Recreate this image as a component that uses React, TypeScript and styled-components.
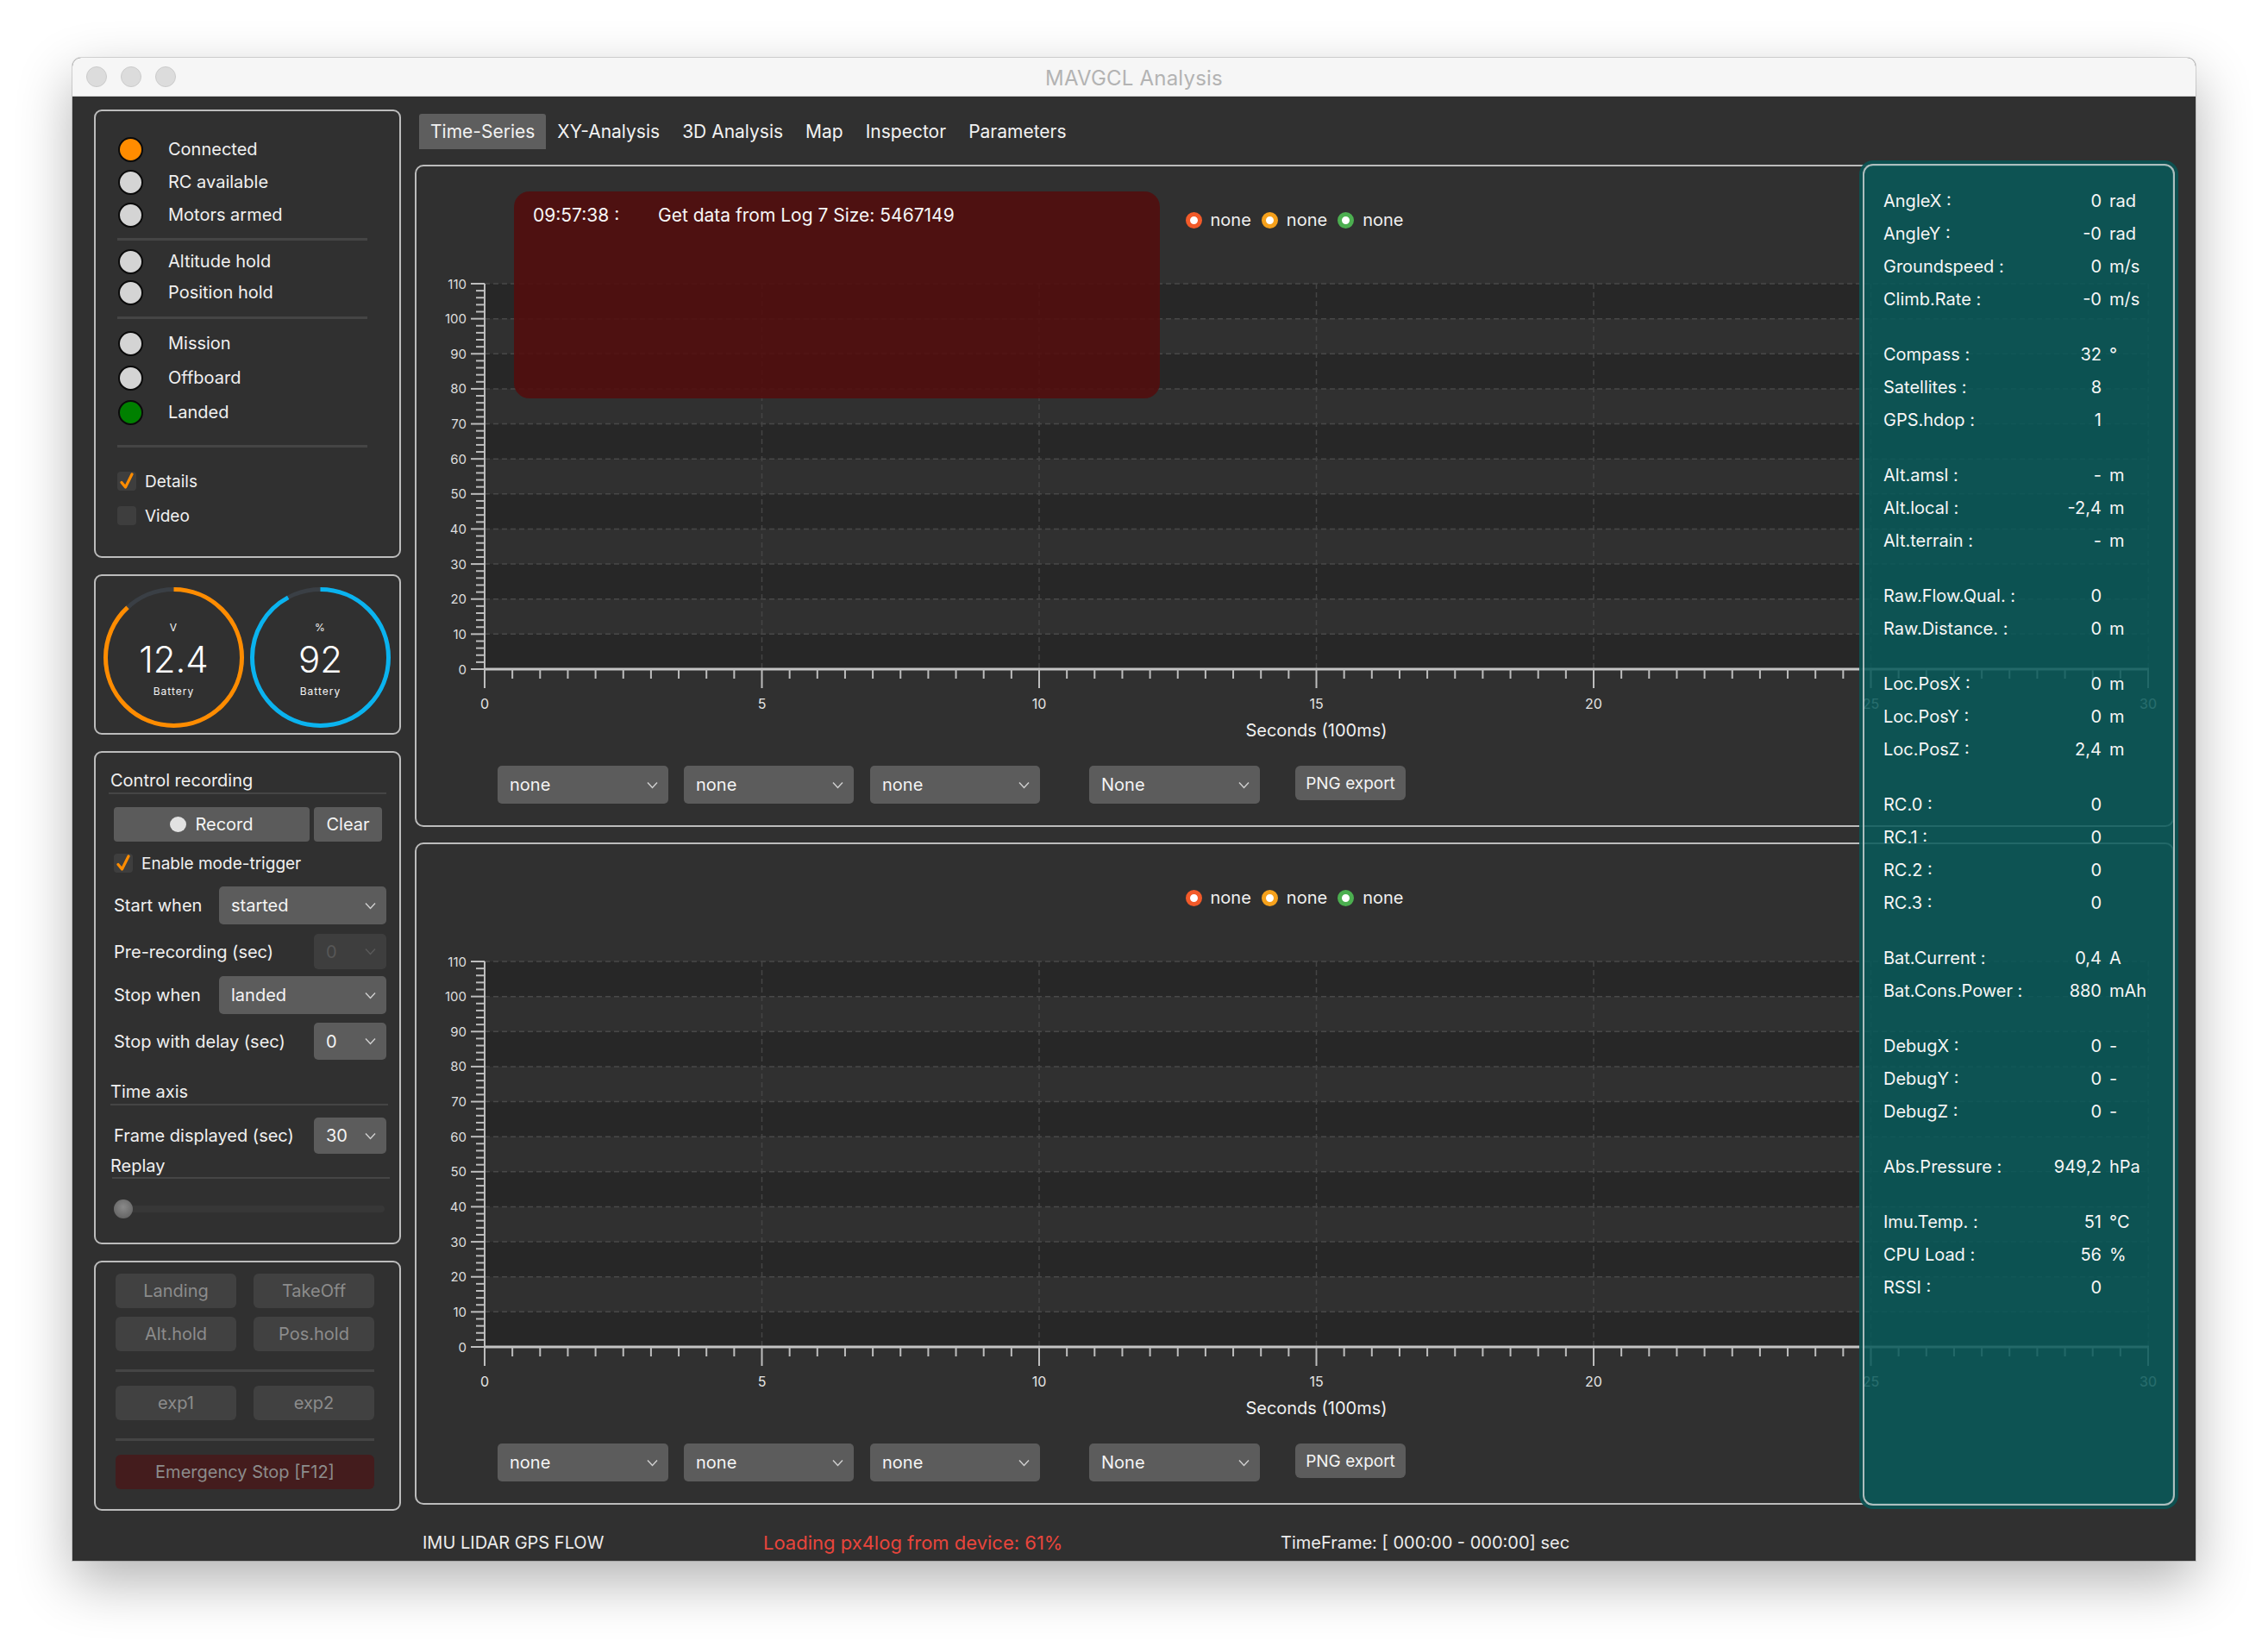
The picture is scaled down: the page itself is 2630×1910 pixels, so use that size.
import React from "react";
import styled, { createGlobalStyle } from "styled-components";

const FONT = `Inter, "Noto Sans", "Liberation Sans", sans-serif`;

const GlobalStyle = createGlobalStyle`
  * { box-sizing: border-box; }
  html, body { margin: 0; padding: 0; background: #ffffff; }
  body { font-family: ${FONT}; }
`;

/* ---------- window frame ---------- */
const Page = styled.div`
  width: 2630px;
  height: 1910px;
  padding: 67px 0 0 84px;
  background: #ffffff;
`;

const Window = styled.div`
  width: 2462px;
  height: 1743px;
  border-radius: 10px 10px 0 0;
  overflow: hidden;
  display: flex;
  flex-direction: column;
  background: #303030;
  box-shadow: 0 24px 64px rgba(0, 0, 0, 0.3), 0 0 0 1px rgba(0, 0, 0, 0.14);
`;

const TitleBar = styled.div`
  height: 45px;
  flex: none;
  display: grid;
  grid-template-columns: 1fr auto 1fr;
  align-items: center;
  background: #f6f6f6;
  border-bottom: 1px solid #d4d4d4;
`;

const Lights = styled.div`
  display: flex;
  gap: 16px;
  padding-left: 16px;
`;

const Light = styled.span`
  width: 24px;
  height: 24px;
  border-radius: 50%;
  background: #dcdcdc;
  border: 1px solid #cbcbcb;
`;

const Title = styled.div`
  font-size: 24px;
  color: #b3b3b3;
  letter-spacing: 0.2px;
  padding-top: 2px;
`;

const Body = styled.div`
  flex: 1;
  display: grid;
  grid-template-columns: 356px 2040px;
  column-gap: 16px;
  padding: 15px 25px 0 25px;
`;

/* ---------- left column ---------- */
const LeftCol = styled.div`
  display: flex;
  flex-direction: column;
  gap: 19px;
`;

const Panel = styled.div<{ $h: number; $pt?: number }>`
  height: ${(p) => p.$h}px;
  border: 2px solid #bcbcbc;
  border-radius: 9px;
  display: flex;
  flex-direction: column;
  padding-top: ${(p) => p.$pt ?? 0}px;
  color: #f0f0f0;
`;

const LedRow = styled.div<{ $h: number; $mt?: number }>`
  height: ${(p) => p.$h}px;
  margin-top: ${(p) => p.$mt ?? 0}px;
  display: flex;
  align-items: center;
  gap: 29px;
  padding-left: 26px;
  font-size: 20px;
`;

const Led = styled.span<{ $c: string }>`
  width: 29px;
  height: 29px;
  border-radius: 50%;
  border: 2px solid #0b0b0b;
  background: ${(p) => p.$c};
  flex: none;
`;

const Sep = styled.div<{ $mt: number; $l: number; $r: number; $h?: number }>`
  height: ${(p) => p.$h ?? 3}px;
  margin: ${(p) => p.$mt}px ${(p) => p.$r}px 0 ${(p) => p.$l}px;
  background: #454545;
  flex: none;
`;

const CheckRow = styled.div<{ $h: number; $mt?: number; $pl: number; $fs?: number }>`
  height: ${(p) => p.$h}px;
  margin-top: ${(p) => p.$mt ?? 0}px;
  padding-left: ${(p) => p.$pl}px;
  display: flex;
  align-items: center;
  gap: 10px;
  font-size: ${(p) => p.$fs ?? 20}px;
  flex: none;
`;

const CheckBox = styled.span`
  width: 22px;
  height: 22px;
  border-radius: 4px;
  background: #3e3e3e;
  display: flex;
  align-items: center;
  justify-content: center;
  flex: none;
`;

const Check = ({ on }: { on: boolean }) => (
  <CheckBox>
    {on && (
      <svg width="18" height="20" viewBox="0 0 18 20">
        <path d="M3 11.5 L7.5 17 L15 2" fill="none" stroke="#ff8c00" strokeWidth="3.2" strokeLinecap="round" strokeLinejoin="round" />
      </svg>
    )}
  </CheckBox>
);

/* gauges */
const GaugeRowBox = styled.div`
  display: flex;
  gap: 7px;
  padding: 13px 0 0 9px;
`;

const GaugeBox = styled.div`
  position: relative;
  width: 163px;
  height: 163px;
  display: flex;
  flex-direction: column;
  align-items: center;
  justify-content: center;
  gap: 6px;
  padding-top: 4px;
`;

const GaugeSvg = styled.svg`
  position: absolute;
  inset: 0;
`;

const GaugeSmall = styled.div`
  position: relative;
  font-size: 12px;
  line-height: 16px;
  letter-spacing: 1px;
  color: #f4f4f4;
`;

const GaugeValue = styled.div`
  position: relative;
  font-size: 42px;
  line-height: 46px;
  font-weight: 300;
  color: #ffffff;
`;

const Gauge = ({ unit, value, pct, color }: { unit: string; value: string; pct: number; color: string }) => {
  const r = 79;
  const c = 2 * Math.PI * r;
  return (
    <GaugeBox>
      <GaugeSvg width="163" height="163" viewBox="0 0 163 163">
        <circle cx="81.5" cy="81.5" r={r} fill="none" stroke="#3a3f45" strokeWidth="5" />
        <circle
          cx="81.5"
          cy="81.5"
          r={r}
          fill="none"
          stroke={color}
          strokeWidth="5"
          strokeDasharray={`${c * pct} ${c}`}
          transform="rotate(-90 81.5 81.5)"
        />
      </GaugeSvg>
      <GaugeSmall>{unit}</GaugeSmall>
      <GaugeValue>{value}</GaugeValue>
      <GaugeSmall>Battery</GaugeSmall>
    </GaugeBox>
  );
};

/* recording form */
const SectionTitle = styled.div<{ $mt: number }>`
  height: 24px;
  margin-top: ${(p) => p.$mt}px;
  padding-left: 17px;
  display: flex;
  align-items: center;
  font-size: 20px;
  flex: none;
`;

const ButtonRow = styled.div<{ $mt: number }>`
  margin-top: ${(p) => p.$mt}px;
  padding-left: 21px;
  display: flex;
  gap: 5px;
  height: 40px;
  flex: none;
`;

const DarkButton = styled.div<{ $w: number }>`
  width: ${(p) => p.$w}px;
  height: 40px;
  border-radius: 4px;
  background: #5b5b5b;
  display: flex;
  align-items: center;
  justify-content: center;
  gap: 10px;
  font-size: 20px;
  color: #f4f4f4;
`;

const RecDot = styled.span`
  width: 19px;
  height: 18px;
  border-radius: 50%;
  background: #e2e2e2;
`;

const FormRow = styled.div<{ $mt: number; $h: number }>`
  margin-top: ${(p) => p.$mt}px;
  height: ${(p) => p.$h}px;
  padding: 0 15px 0 21px;
  display: flex;
  align-items: center;
  justify-content: space-between;
  font-size: 20px;
  flex: none;
`;

const Combo = styled.div<{ $w: number; $h?: number; $disabled?: boolean }>`
  width: ${(p) => p.$w}px;
  height: ${(p) => p.$h ?? 44}px;
  border-radius: 5px;
  background: ${(p) => (p.$disabled ? "#3e3e3e" : "#5c5c5c")};
  color: ${(p) => (p.$disabled ? "#575757" : "#f4f4f4")};
  display: flex;
  align-items: center;
  justify-content: space-between;
  padding: 0 12px 0 14px;
  font-size: 20px;
  flex: none;
`;

const Chevron = ({ dim }: { dim?: boolean }) => (
  <svg width="13" height="9" viewBox="0 0 13 9">
    <polyline points="1,1.5 6.5,7.5 12,1.5" fill="none" stroke={dim ? "#5a5a5a" : "#d0d0d0"} strokeWidth="1.4" />
  </svg>
);

const SliderRow = styled.div`
  margin-top: 24px;
  height: 22px;
  margin-left: 21px;
  margin-right: 17px;
  position: relative;
  display: flex;
  align-items: center;
  flex: none;
`;

const SliderTrack = styled.div`
  flex: 1;
  height: 8px;
  border-radius: 4px;
  background: #373737;
`;

const SliderThumb = styled.span`
  position: absolute;
  left: 0;
  top: 0;
  width: 22px;
  height: 22px;
  border-radius: 50%;
  background: radial-gradient(circle at 50% 40%, #8a8a8a, #5a5a5a);
`;

/* command buttons */
const CmdGrid = styled.div<{ $mt: number }>`
  margin-top: ${(p) => p.$mt}px;
  padding-left: 23px;
  display: grid;
  grid-template-columns: 140px 140px;
  column-gap: 20px;
  row-gap: 10px;
  flex: none;
`;

const CmdButton = styled.div<{ $danger?: boolean; $span?: boolean }>`
  height: 40px;
  border-radius: 6px;
  background: ${(p) => (p.$danger ? "#441c1d" : "#414141")};
  color: #8c8c8c;
  font-size: 20px;
  display: flex;
  align-items: center;
  justify-content: center;
  grid-column: ${(p) => (p.$span ? "1 / span 2" : "auto")};
`;

/* ---------- main column ---------- */
const MainCol = styled.div`
  display: flex;
  flex-direction: column;
`;

const TabBar = styled.div`
  display: flex;
  height: 41px;
  margin: 5px 0 0 5px;
  flex: none;
`;

const Tab = styled.div<{ $active?: boolean }>`
  padding: 0 13px;
  display: flex;
  align-items: center;
  font-size: 21px;
  color: #f2f2f2;
  border-radius: 3px 3px 0 0;
  background: ${(p) => (p.$active ? "#5e5e5e" : "transparent")};
`;

const ChartArea = styled.div`
  position: relative;
  margin-top: 18px;
  height: 1554px;
  display: flex;
  flex-direction: column;
  gap: 18px;
  flex: none;
`;

const ChartPanel = styled.div`
  position: relative;
  height: 768px;
  border: 2px solid #bcbcbc;
  border-radius: 10px;
  display: flex;
  flex-direction: column;
  color: #f0f0f0;
`;

const Legend = styled.div`
  margin-top: 50px;
  height: 24px;
  display: flex;
  justify-content: center;
  align-items: center;
  gap: 12px;
  font-size: 20px;
  flex: none;
`;

const LegendItem = styled.div`
  display: flex;
  align-items: center;
  gap: 10px;
`;

const LegendDot = styled.span<{ $c: string }>`
  width: 19px;
  height: 19px;
  border-radius: 50%;
  border: 5px solid ${(p) => p.$c};
  background: #ffffff;
`;

const AxisTitle = styled.div`
  margin-left: 79px;
  width: 1929px;
  height: 26px;
  display: flex;
  align-items: center;
  justify-content: center;
  font-size: 20px;
  flex: none;
`;

const ComboRow = styled.div`
  margin-top: 28px;
  padding-left: 94px;
  display: flex;
  align-items: flex-start;
  flex: none;
`;

const ComboGap = styled.span<{ $w: number }>`
  width: ${(p) => p.$w}px;
  flex: none;
`;

const ExportButton = styled.div`
  width: 128px;
  height: 40px;
  border-radius: 6px;
  background: #5c5c5c;
  display: flex;
  align-items: center;
  justify-content: center;
  font-size: 19px;
  color: #f4f4f4;
`;

const MessageBox = styled.div`
  position: absolute;
  left: 113px;
  top: 29px;
  width: 749px;
  height: 240px;
  border-radius: 18px;
  background: rgba(82, 14, 14, 0.9);
  padding: 15px 0 0 22px;
  display: flex;
  font-size: 21px;
  color: #f6f6f6;
`;

const MsgTime = styled.span`
  width: 145px;
`;

const TealPanel = styled.div`
  position: absolute;
  top: -1px;
  right: -1px;
  width: 362px;
  bottom: -1px;
  border: 2px solid rgba(200, 208, 208, 0.85);
  border-radius: 12px;
  background: rgba(8, 90, 90, 0.86);
  box-shadow: 0 0 0 4px rgba(12, 82, 82, 0.95);
  padding: 22px 0 0 22px;
  color: #f6f6f6;
`;

const TeleRow = styled.div<{ $mt: number }>`
  margin-top: ${(p) => p.$mt}px;
  height: 38px;
  display: flex;
  align-items: center;
  font-size: 20px;
`;

const TeleLabel = styled.span`
  width: 183px;
`;

const TeleValue = styled.span`
  width: 70px;
  text-align: right;
`;

const TeleUnit = styled.span`
  margin-left: 9px;
`;

const StatusBar = styled.div`
  height: 65px;
  padding-top: 22px;
  display: grid;
  grid-template-columns: 395px 600px auto;
  padding-left: 9px;
  align-items: center;
  font-size: 20px;
  color: #ececec;
`;

const StatusAlert = styled.span`
  color: #e8453c;
  font-size: 22px;
`;

/* ---------- chart drawing ---------- */
const PW = 2036;
const PH = 567;
const X0 = 79;
const UX = 64.3;
const Y0 = 509;
const UY = 447 / 110;

const Plot = () => {
  const yTop = Y0 - 110 * UY;
  const xEnd = X0 + 30 * UX;
  const bands = [];
  for (let i = 0; i < 11; i += 2) {
    bands.push(
      <rect key={`b${i}`} x={X0} y={Y0 - (110 - 10 * i) * UY} width={30 * UX} height={10 * UY} fill="#272727" />
    );
  }
  const hGrid = [];
  for (let v = 10; v <= 110; v += 10) {
    hGrid.push(
      <line key={`h${v}`} x1={X0} x2={xEnd} y1={Y0 - v * UY} y2={Y0 - v * UY} stroke="#484848" strokeWidth="1.5" strokeDasharray="6 4" />
    );
  }
  const vGrid = [];
  for (let v = 5; v <= 30; v += 5) {
    vGrid.push(
      <line key={`v${v}`} x1={X0 + v * UX} x2={X0 + v * UX} y1={yTop} y2={Y0} stroke="#444444" strokeWidth="1.5" strokeDasharray="6 4" />
    );
  }
  const yTicks = [];
  for (let v = 0; v <= 110; v += 2) {
    const major = v % 10 === 0;
    const y = Y0 - v * UY;
    yTicks.push(<line key={`yt${v}`} x1={major ? X0 - 16 : X0 - 10} x2={X0} y1={y} y2={y} stroke="#bdbdbd" strokeWidth="2" />);
    if (major) {
      yTicks.push(
        <text key={`yl${v}`} x={X0 - 21} y={y + 5.5} textAnchor="end" fontSize="15" fill="#dedede" fontFamily={FONT}>
          {v}
        </text>
      );
    }
  }
  const xTicks = [];
  for (let k = 0; k <= 60; k++) {
    const major = k % 10 === 0;
    const x = X0 + (k / 2) * UX;
    xTicks.push(<line key={`xt${k}`} x1={x} x2={x} y1={Y0} y2={major ? Y0 + 22 : Y0 + 11} stroke="#bdbdbd" strokeWidth="2" />);
    if (major) {
      xTicks.push(
        <text key={`xl${k}`} x={x} y={Y0 + 46} textAnchor="middle" fontSize="16" fill="#e4e4e4" fontFamily={FONT}>
          {k / 2}
        </text>
      );
    }
  }
  return (
    <svg width={PW} height={PH} viewBox={`0 0 ${PW} ${PH}`} style={{ display: "block", flex: "none" }}>
      {bands}
      {hGrid}
      {vGrid}
      <line x1={X0} x2={X0} y1={yTop} y2={Y0} stroke="#bdbdbd" strokeWidth="2" />
      {yTicks}
      <line x1={X0 - 1} x2={xEnd + 1} y1={Y0} y2={Y0} stroke="#c4c4c4" strokeWidth="3" />
      {xTicks}
    </svg>
  );
};

const Chart = ({ message }: { message?: boolean }) => (
  <ChartPanel>
    <Legend>
      <LegendItem>
        <LegendDot $c="#f25a29" />
        none
      </LegendItem>
      <LegendItem>
        <LegendDot $c="#f6a11c" />
        none
      </LegendItem>
      <LegendItem>
        <LegendDot $c="#4caf50" />
        none
      </LegendItem>
    </Legend>
    <Plot />
    <AxisTitle>Seconds (100ms)</AxisTitle>
    <ComboRow>
      <Combo $w={198}>
        none
        <Chevron />
      </Combo>
      <ComboGap $w={18} />
      <Combo $w={197}>
        none
        <Chevron />
      </Combo>
      <ComboGap $w={19} />
      <Combo $w={197}>
        none
        <Chevron />
      </Combo>
      <ComboGap $w={57} />
      <Combo $w={198}>
        None
        <Chevron />
      </Combo>
      <ComboGap $w={41} />
      <ExportButton>PNG export</ExportButton>
    </ComboRow>
    {message && (
      <MessageBox>
        <MsgTime>09:57:38 :</MsgTime>
        <span>Get data from Log 7 Size: 5467149</span>
      </MessageBox>
    )}
  </ChartPanel>
);

const telemetry: [string, string, string][][] = [
  [
    ["AngleX :", "0", "rad"],
    ["AngleY :", "-0", "rad"],
    ["Groundspeed :", "0", "m/s"],
    ["Climb.Rate :", "-0", "m/s"],
  ],
  [
    ["Compass :", "32", "°"],
    ["Satellites :", "8", ""],
    ["GPS.hdop :", "1", ""],
  ],
  [
    ["Alt.amsl :", "-", "m"],
    ["Alt.local :", "-2,4", "m"],
    ["Alt.terrain :", "-", "m"],
  ],
  [
    ["Raw.Flow.Qual. :", "0", ""],
    ["Raw.Distance. :", "0", "m"],
  ],
  [
    ["Loc.PosX :", "0", "m"],
    ["Loc.PosY :", "0", "m"],
    ["Loc.PosZ :", "2,4", "m"],
  ],
  [
    ["RC.0 :", "0", ""],
    ["RC.1 :", "0", ""],
    ["RC.2 :", "0", ""],
    ["RC.3 :", "0", ""],
  ],
  [
    ["Bat.Current :", "0,4", "A"],
    ["Bat.Cons.Power :", "880", "mAh"],
  ],
  [
    ["DebugX :", "0", "-"],
    ["DebugY :", "0", "-"],
    ["DebugZ :", "0", "-"],
  ],
  [["Abs.Pressure :", "949,2", "hPa"]],
  [
    ["Imu.Temp. :", "51", "°C"],
    ["CPU Load :", "56", "%"],
    ["RSSI :", "0", ""],
  ],
];

export default function App() {
  return (
    <Page>
      <GlobalStyle />
      <Window>
        <TitleBar>
          <Lights>
            <Light />
            <Light />
            <Light />
          </Lights>
          <Title>MAVGCL Analysis</Title>
          <span />
        </TitleBar>
        <Body>
          <LeftCol>
            <Panel $h={520} $pt={25}>
              <LedRow $h={38}>
                <Led $c="#ff8c00" />
                Connected
              </LedRow>
              <LedRow $h={38}>
                <Led $c="#d4d4d4" />
                RC available
              </LedRow>
              <LedRow $h={38}>
                <Led $c="#d4d4d4" />
                Motors armed
              </LedRow>
              <Sep $mt={8} $l={25} $r={37} />
              <LedRow $h={36} $mt={6}>
                <Led $c="#d4d4d4" />
                Altitude hold
              </LedRow>
              <LedRow $h={36}>
                <Led $c="#d4d4d4" />
                Position hold
              </LedRow>
              <Sep $mt={10} $l={25} $r={37} />
              <LedRow $h={40} $mt={8}>
                <Led $c="#d4d4d4" />
                Mission
              </LedRow>
              <LedRow $h={40}>
                <Led $c="#d4d4d4" />
                Offboard
              </LedRow>
              <LedRow $h={40}>
                <Led $c="#008000" />
                Landed
              </LedRow>
              <Sep $mt={18} $l={25} $r={37} />
              <CheckRow $h={40} $mt={19} $pl={25} $fs={19}>
                <Check on />
                Details
              </CheckRow>
              <CheckRow $h={40} $pl={25} $fs={19}>
                <Check on={false} />
                Video
              </CheckRow>
            </Panel>

            <Panel $h={186}>
              <GaugeRowBox>
                <Gauge unit="V" value="12.4" pct={0.88} color="#ff8c00" />
                <Gauge unit="%" value="92" pct={0.92} color="#0ab3ef" />
              </GaugeRowBox>
            </Panel>

            <Panel $h={572} $pt={20}>
              <SectionTitle $mt={0}>Control recording</SectionTitle>
              <Sep $mt={2} $l={15} $r={15} $h={2} />
              <ButtonRow $mt={15}>
                <DarkButton $w={227}>
                  <RecDot />
                  Record
                </DarkButton>
                <DarkButton $w={79}>Clear</DarkButton>
              </ButtonRow>
              <CheckRow $h={22} $mt={14} $pl={21} $fs={19}>
                <Check on />
                Enable mode-trigger
              </CheckRow>
              <FormRow $mt={16} $h={44}>
                Start when
                <Combo $w={194}>
                  started
                  <Chevron />
                </Combo>
              </FormRow>
              <FormRow $mt={11} $h={41}>
                Pre-recording (sec)
                <Combo $w={84} $h={41} $disabled>
                  0
                  <Chevron dim />
                </Combo>
              </FormRow>
              <FormRow $mt={8} $h={44}>
                Stop when
                <Combo $w={194}>
                  landed
                  <Chevron />
                </Combo>
              </FormRow>
              <FormRow $mt={10} $h={43}>
                Stop with delay (sec)
                <Combo $w={84} $h={43}>
                  0
                  <Chevron />
                </Combo>
              </FormRow>
              <SectionTitle $mt={25}>Time axis</SectionTitle>
              <Sep $mt={2} $l={17} $r={13} $h={2} />
              <FormRow $mt={14} $h={42}>
                Frame displayed (sec)
                <Combo $w={84} $h={42}>
                  30
                  <Chevron />
                </Combo>
              </FormRow>
              <SectionTitle $mt={2}>Replay</SectionTitle>
              <Sep $mt={1} $l={19} $r={11} $h={2} />
              <SliderRow>
                <SliderTrack />
                <SliderThumb />
              </SliderRow>
            </Panel>

            <Panel $h={290} $pt={13}>
              <CmdGrid $mt={0}>
                <CmdButton>Landing</CmdButton>
                <CmdButton>TakeOff</CmdButton>
                <CmdButton>Alt.hold</CmdButton>
                <CmdButton>Pos.hold</CmdButton>
              </CmdGrid>
              <Sep $mt={21} $l={23} $r={29} />
              <CmdGrid $mt={16}>
                <CmdButton>exp1</CmdButton>
                <CmdButton>exp2</CmdButton>
              </CmdGrid>
              <Sep $mt={21} $l={23} $r={29} />
              <CmdGrid $mt={16}>
                <CmdButton $danger $span>
                  Emergency Stop [F12]
                </CmdButton>
              </CmdGrid>
            </Panel>
          </LeftCol>

          <MainCol>
            <TabBar>
              <Tab $active>Time-Series</Tab>
              <Tab>XY-Analysis</Tab>
              <Tab>3D Analysis</Tab>
              <Tab>Map</Tab>
              <Tab>Inspector</Tab>
              <Tab>Parameters</Tab>
            </TabBar>
            <ChartArea>
              <Chart message />
              <Chart />
              <TealPanel>
                {telemetry.map((group, gi) =>
                  group.map(([label, value, unit], ri) => (
                    <TeleRow key={`${gi}-${ri}`} $mt={gi > 0 && ri === 0 ? 26 : 0}>
                      <TeleLabel>{label}</TeleLabel>
                      <TeleValue>{value}</TeleValue>
                      <TeleUnit>{unit}</TeleUnit>
                    </TeleRow>
                  ))
                )}
              </TealPanel>
            </ChartArea>
            <StatusBar>
              <span>IMU LIDAR GPS FLOW</span>
              <StatusAlert>Loading px4log from device: 61%</StatusAlert>
              <span>TimeFrame: [ 000:00 -  000:00] sec</span>
            </StatusBar>
          </MainCol>
        </Body>
      </Window>
    </Page>
  );
}
